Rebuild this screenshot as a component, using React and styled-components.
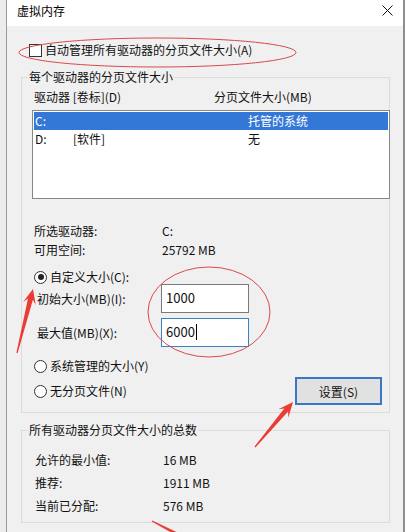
import React from "react";
import styled, { createGlobalStyle } from "styled-components";

const GlobalStyle = createGlobalStyle`
  * { box-sizing: border-box; }
  body {
    margin: 0;
    background: #fff;
    font-family: "Microsoft YaHei", "Noto Sans CJK SC", "Noto Sans", sans-serif;
    font-size: 12px;
    color: #111;
  }
`;

const drives = [
  { letter: "C:", label: "", size: "托管的系统", selected: true },
  { letter: "D:", label: "[软件]", size: "无" },
];

const totals = [
  ["允许的最小值:", "16 MB"],
  ["推荐:", "1911 MB"],
  ["当前已分配:", "576 MB"],
];

// arrow polygon from tail to tip
const arrowPoints = (x1, y1, x2, y2, headLen = 15, headW = 13, shaftW = 5) => {
  const len = Math.hypot(x2 - x1, y2 - y1);
  const dx = (x2 - x1) / len;
  const dy = (y2 - y1) / len;
  const nx = -dy;
  const ny = dx;
  const at = (back, side) =>
    `${(x2 - dx * back + nx * side).toFixed(1)},${(y2 - dy * back + ny * side).toFixed(1)}`;
  return [
    `${x1 + nx * 0.6},${y1 + ny * 0.6}`,
    at(headLen * 0.7, shaftW / 2),
    at(headLen, headW / 2),
    `${x2},${y2}`,
    at(headLen, -headW / 2),
    at(headLen * 0.7, -shaftW / 2),
    `${x1 - nx * 0.6},${y1 - ny * 0.6}`,
  ].join(" ");
};

const App = () => {
  return (
    <Page>
      <GlobalStyle />
      <Backdrop />
      <Window>
        <TitleBar>
          <Title>虚拟内存</Title>
          <Close>
            <svg width="11" height="11" viewBox="0 0 11 11">
              <path d="M0.5 0.5 L10.5 10.5 M10.5 0.5 L0.5 10.5" stroke="#111" strokeWidth="1" />
            </svg>
          </Close>
        </TitleBar>

        <Body>
          <CheckRow>
            <Checkbox />
            <span>自动管理所有驱动器的分页文件大小(A)</span>
          </CheckRow>

          <GroupBox $mt={12} $pb={7}>
            <Legend>每个驱动器的分页文件大小</Legend>
            <HeaderRow>
              <span>驱动器 [卷标](D)</span>
              <span>分页文件大小(MB)</span>
            </HeaderRow>
            <ListBox>
              {drives.map((d) => (
                <ListRow key={d.letter} $selected={d.selected}>
                  <span>{d.letter}</span>
                  <span>{d.label}</span>
                  <span>{d.size}</span>
                </ListRow>
              ))}
            </ListBox>

            <InfoGrid>
              <span>所选驱动器:</span>
              <span>C:</span>
              <span>可用空间:</span>
              <span>25792 MB</span>
            </InfoGrid>

            <RadioRow $mt={11}>
              <Radio $checked />
              <span>自定义大小(C):</span>
            </RadioRow>
            <FieldRow $mt={0}>
              <span>初始大小(MB)(I):</span>
              <TextBox>1000</TextBox>
            </FieldRow>
            <FieldRow $mt={5}>
              <span>最大值(MB)(X):</span>
              <TextBox $focused>
                6000
                <Caret />
              </TextBox>
            </FieldRow>
            <RadioRow $mt={12}>
              <Radio />
              <span>系统管理的大小(Y)</span>
            </RadioRow>
            <ButtonRow>
              <RadioRow $mt={0} $flat>
                <Radio />
                <span>无分页文件(N)</span>
              </RadioRow>
              <Button>设置(S)</Button>
            </ButtonRow>
          </GroupBox>

          <GroupBox $mt={9} $pb={5}>
            <Legend>所有驱动器分页文件大小的总数</Legend>
            <TotalsGrid>
              {totals.map(([k, v]) => (
                <React.Fragment key={k}>
                  <span>{k}</span>
                  <span>{v}</span>
                </React.Fragment>
              ))}
            </TotalsGrid>
          </GroupBox>
        </Body>
      </Window>

      <Marks width="407" height="532" viewBox="0 0 407 532">
        <ellipse cx="157.5" cy="52.5" rx="138.5" ry="14.5" fill="none" stroke="#d9494c" strokeWidth="1" />
        <ellipse cx="209" cy="312" rx="61" ry="45" fill="none" stroke="#d9494c" strokeWidth="1" />
        <polygon points={arrowPoints(17, 353, 33, 289)} fill="#ea3c35" />
        <polygon points={arrowPoints(255, 447, 293, 402)} fill="#ea3c35" />
        <polygon points={arrowPoints(152, 521, 208, 550)} fill="#ea3c35" />
      </Marks>
    </Page>
  );
};

export default App;

const Page = styled.div`
  position: relative;
  display: flex;
  width: 407px;
  height: 532px;
  overflow: hidden;
  background: #fff;
`;

const Backdrop = styled.div`
  width: 6px;
  background: #ececec;
`;

const Window = styled.div`
  display: flex;
  flex-direction: column;
  width: 399px;
  border-left: 1px solid #9b9b9b;
  border-right: 2px solid #8e8e8e;
`;

const TitleBar = styled.div`
  display: flex;
  align-items: flex-start;
  height: 26px;
  padding: 4px 10px 0 10px;
  background: #fff;
`;

const Title = styled.span`
  line-height: 14px;
  color: #000;
`;

const Close = styled.span`
  display: flex;
  margin-left: auto;
  margin-top: 1px;
`;

const Body = styled.div`
  flex: 1;
  padding: 17px 13px 0 14px;
  background: #f0f0f0;
`;

const CheckRow = styled.div`
  display: flex;
  align-items: center;
  gap: 3px;
  height: 14px;
  line-height: 14px;
`;

const Checkbox = styled.span`
  width: 13px;
  height: 13px;
  margin-left: 8px;
  border: 1px solid #333;
  background: #fff;
`;

const GroupBox = styled.fieldset`
  min-width: 0;
  margin: ${(p) => p.$mt}px 0 0;
  padding: 0 0 ${(p) => p.$pb}px;
  border: 1px solid #dcdcdc;
`;

const Legend = styled.legend`
  margin-left: 6px;
  padding: 0 1px;
  line-height: 16px;
  font-size: 12px;
`;

const HeaderRow = styled.div`
  display: grid;
  grid-template-columns: 180px 1fr;
  margin-top: 4px;
  padding-left: 12px;
  line-height: 16px;
`;

const ListBox = styled.div`
  width: 358px;
  height: 89px;
  margin: 5px 0 0 10px;
  padding: 1px;
  border: 1px solid #828790;
  background: #fff;
`;

const ListRow = styled.div`
  display: grid;
  grid-template-columns: 38px 175px 1fr;
  height: 18px;
  padding-left: 1px;
  line-height: 18px;
  background: ${(p) => (p.$selected ? "#3378d6" : "transparent")};
  color: ${(p) => (p.$selected ? "#fff" : "#111")};
`;

const InfoGrid = styled.div`
  display: grid;
  grid-template-columns: 128px 1fr;
  margin-top: 22px;
  padding-left: 12px;
  line-height: 19px;
`;

const RadioRow = styled.div`
  display: flex;
  align-items: center;
  gap: 3px;
  height: 14px;
  margin-top: ${(p) => p.$mt}px;
  padding-left: ${(p) => (p.$flat ? 0 : 12)}px;
  line-height: 14px;
`;

const Radio = styled.span`
  position: relative;
  width: 13px;
  height: 13px;
  border: 1px solid #333;
  border-radius: 50%;
  background: #fff;

  &::after {
    content: "";
    display: ${(p) => (p.$checked ? "block" : "none")};
    position: absolute;
    left: 2.5px;
    top: 2.5px;
    width: 6px;
    height: 6px;
    border-radius: 50%;
    background: #222;
  }
`;

const FieldRow = styled.div`
  display: grid;
  grid-template-columns: 124px 88px;
  align-items: center;
  height: 29px;
  margin-top: ${(p) => p.$mt}px;
  padding-left: 15px;
`;

const TextBox = styled.div`
  display: flex;
  align-items: center;
  height: 29px;
  padding: 0 0 2px 4px;
  border: 1px solid ${(p) => (p.$focused ? "#3c7fc2" : "#7a7a7a")};
  background: #fff;
  font-size: 13px;
  line-height: 20px;
`;

const Caret = styled.span`
  width: 1px;
  height: 16px;
  margin-left: 1px;
  background: #000;
`;

const ButtonRow = styled.div`
  display: flex;
  align-items: center;
  justify-content: space-between;
  height: 28px;
  margin-top: 4px;
  padding: 0 7px 0 12px;
`;

const Button = styled.div`
  display: flex;
  align-items: center;
  justify-content: center;
  width: 87px;
  height: 28px;
  border: 2px solid #3a77c7;
  background: #e1e1e1;
`;

const TotalsGrid = styled.div`
  display: grid;
  grid-template-columns: 128px 1fr;
  padding: 10px 0 0 13px;
  line-height: 23px;
`;

const Marks = styled.svg`
  position: absolute;
  top: 0;
  left: 0;
  pointer-events: none;
`;
